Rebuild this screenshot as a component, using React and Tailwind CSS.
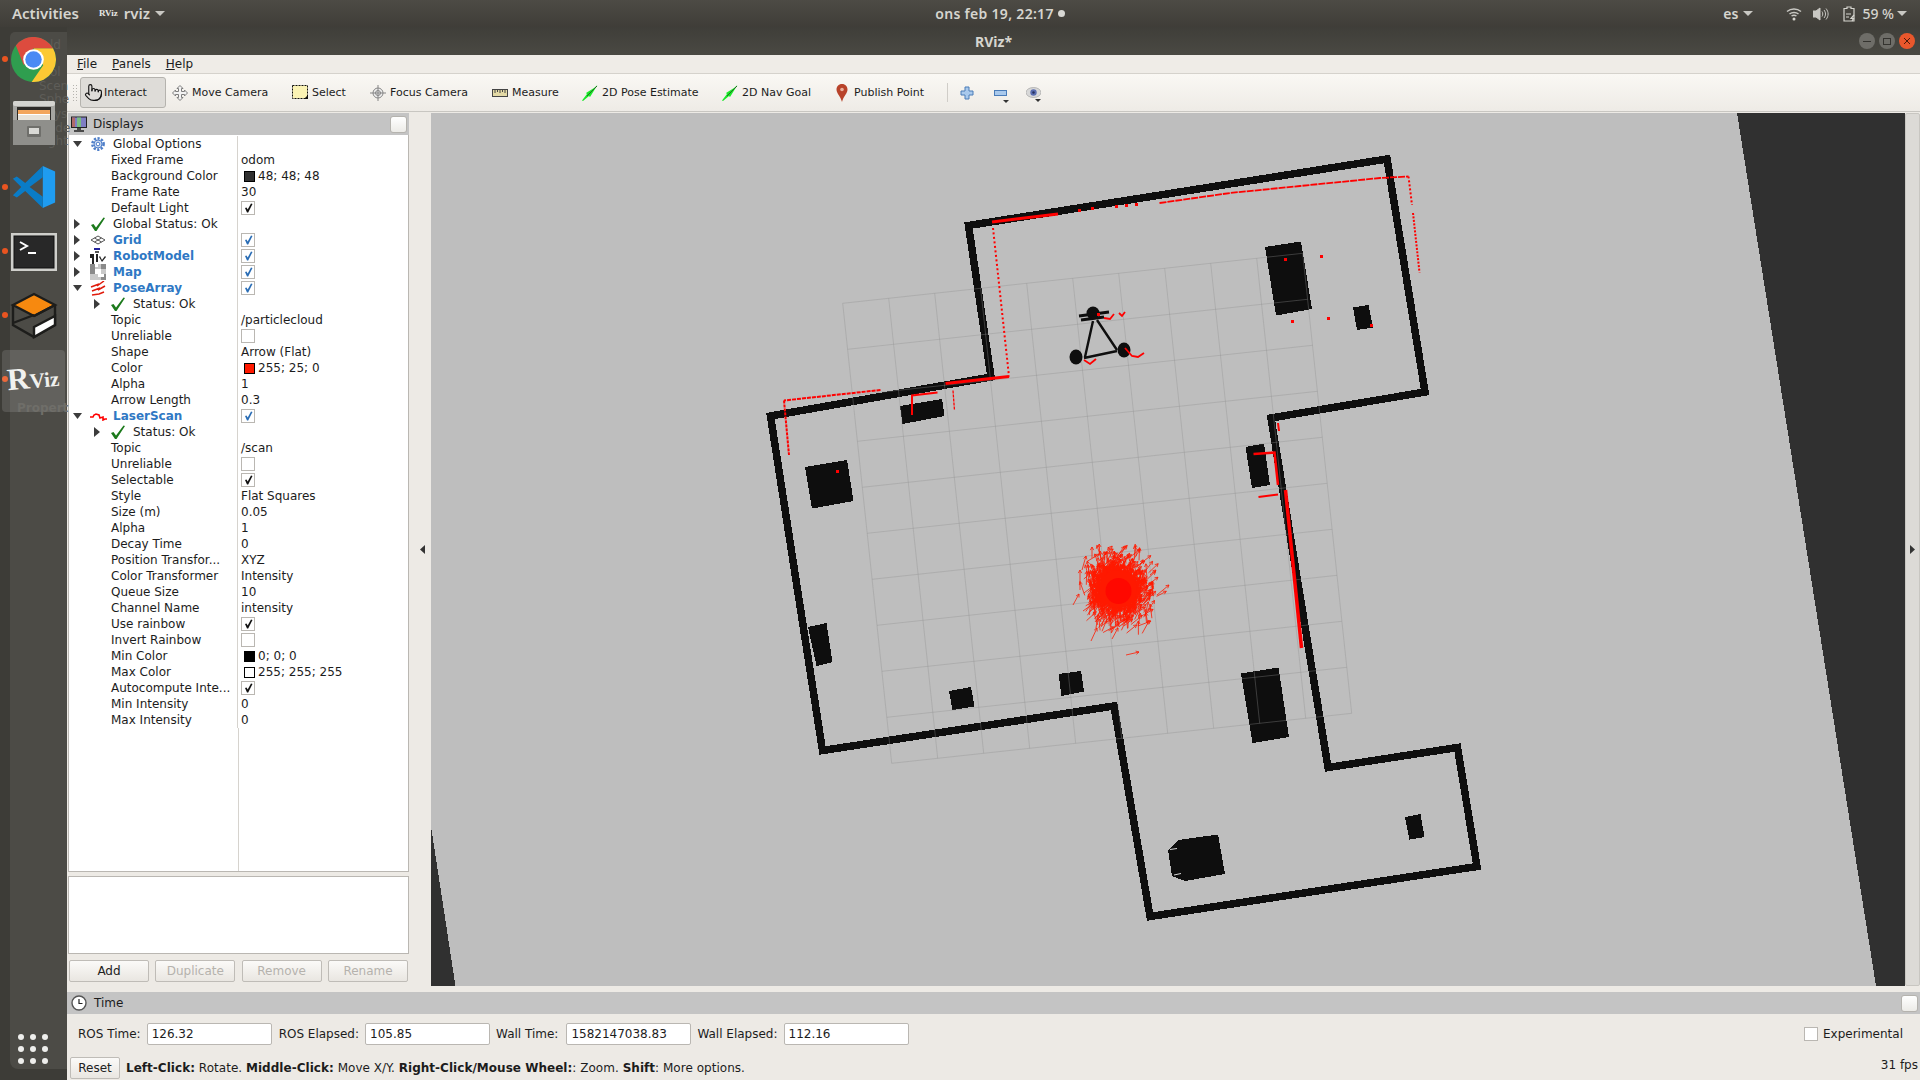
import { Pointer } from 'lucide-react';

const FONT = "font-['DejaVu_Sans',sans-serif]";

// --- tree data ---
const rows = [
  { arrow: 'down', icon: 'gear', label: 'Global Options' },
  { label: 'Fixed Frame', value: 'odom' },
  { label: 'Background Color', color: 'bg-[#303030]', value: '48; 48; 48' },
  { label: 'Frame Rate', value: '30' },
  { label: 'Default Light', check: 'black' },
  { arrow: 'right', icon: 'ok', label: 'Global Status: Ok' },
  { arrow: 'right', icon: 'grid', label: 'Grid', link: true, check: 'blue' },
  { arrow: 'right', icon: 'robot', label: 'RobotModel', link: true, check: 'blue' },
  { arrow: 'right', icon: 'map', label: 'Map', link: true, check: 'blue' },
  { arrow: 'down', icon: 'pose', label: 'PoseArray', link: true, check: 'blue' },
  { arrow: 'right', icon: 'ok', label: 'Status: Ok', sub: true },
  { label: 'Topic', value: '/particlecloud' },
  { label: 'Unreliable', check: 'none' },
  { label: 'Shape', value: 'Arrow (Flat)' },
  { label: 'Color', color: 'bg-[#ff1900]', value: '255; 25; 0' },
  { label: 'Alpha', value: '1' },
  { label: 'Arrow Length', value: '0.3' },
  { arrow: 'down', icon: 'laser', label: 'LaserScan', link: true, check: 'blue' },
  { arrow: 'right', icon: 'ok', label: 'Status: Ok', sub: true },
  { label: 'Topic', value: '/scan' },
  { label: 'Unreliable', check: 'none' },
  { label: 'Selectable', check: 'black' },
  { label: 'Style', value: 'Flat Squares' },
  { label: 'Size (m)', value: '0.05' },
  { label: 'Alpha', value: '1' },
  { label: 'Decay Time', value: '0' },
  { label: 'Position Transfor...', value: 'XYZ' },
  { label: 'Color Transformer', value: 'Intensity' },
  { label: 'Queue Size', value: '10' },
  { label: 'Channel Name', value: 'intensity' },
  { label: 'Use rainbow', check: 'black' },
  { label: 'Invert Rainbow', check: 'none' },
  { label: 'Min Color', color: 'bg-black', value: '0; 0; 0' },
  { label: 'Max Color', color: 'bg-white', value: '255; 255; 255' },
  { label: 'Autocompute Inte...', check: 'black' },
  { label: 'Min Intensity', value: '0' },
  { label: 'Max Intensity', value: '0' },
];

// --- map data, in page coordinates ---
const wall = '968.5,225.5 1387,159 1425,392 1271,418 1328,767.5 1457.5,747.5 1477,866.5 1150,916.5 1114,706 822.5,750.5 770.5,416 991,377';

const obstacles = [
  '1265,247 1301,241.5 1312,309 1276,315.5',
  '1353,307.5 1368.5,305 1373,327.5 1357,330',
  '900,406 942,399 944.5,416 902.5,424',
  '805,467 847,460 853.5,501 812,508.5',
  '1245.5,447 1264,443.5 1270,485 1252,488',
  '808,627 826.5,623 832.5,662 816.5,666',
  '949,691 971,687 974.5,706.5 952.5,710',
  '1058.5,674 1081,671 1084,691.5 1061.5,696',
  '1241,673.5 1278.5,667.5 1289,737 1252.5,743',
  '1168,850 1178,840 1218,834.5 1225,874 1185,881 1172,876',
  '1405,817 1420.5,814 1424.5,837 1409.5,839.5',
];

const scanLines = [
  { p: '1159.5,203 1230,193 1300,186 1380,178 1408.5,176.5', w: 1.8, dash: '7 1' },
  { p: '992,222 1058,214', w: 3 },
  { p: '1009,376.5 945.5,383.5', w: 3 },
  { p: '880.5,390 784,400.5', w: 2, dash: '4 1' },
  { p: '784,400.5 789,455', w: 2, dash: '3 1' },
  { p: '937.5,392.5 912,395.5 912,415', w: 2 },
  { p: '953,390.5 954.5,410.5', w: 1.3, dash: '3 1' },
  { p: '1278,423 1279,431', w: 2 },
  { p: '1253.5,454 1274.5,452.5 1278,485', w: 2.5 },
  { p: '1258.5,497 1278,494.5', w: 2 },
  { p: '1285.5,490 1301.5,648', w: 3.5 },
  { p: '993,228 1009,376.5', w: 2, dash: '2 2.5' },
  { p: '1408.5,176.5 1412,205', w: 2, dash: '2 2' },
  { p: '1413,213 1419.5,272.5', w: 2, dash: '2 1.5' },
];

const scanDots = [
  [1079, 210], [1092, 208], [1116, 206], [1126, 205], [1136, 204],
  [837.5, 471.5], [1285.5, 259.5], [1321, 256], [1292.5, 321.5], [1328, 318.5], [1371, 325],
  [1098, 314],
];

// small seeded random so the cloud is the same on every render
function makeRandom(seed) {
  let s = seed;
  return () => {
    s = (s + 0x6d2b79f5) | 0;
    let t = Math.imul(s ^ (s >>> 15), 1 | s);
    t = (t + Math.imul(t ^ (t >>> 7), 61 | t)) ^ t;
    return ((t ^ (t >>> 14)) >>> 0) / 4294967296;
  };
}

function arrowPath(x, y, a, len) {
  const ex = x + Math.cos(a) * len;
  const ey = y + Math.sin(a) * len;
  const h = 3.5;
  const l = [ex - Math.cos(a - 0.5) * h, ey - Math.sin(a - 0.5) * h];
  const r = [ex - Math.cos(a + 0.5) * h, ey - Math.sin(a + 0.5) * h];
  return `M${x.toFixed(1)} ${y.toFixed(1)}L${ex.toFixed(1)} ${ey.toFixed(1)}M${l[0].toFixed(1)} ${l[1].toFixed(1)}L${ex.toFixed(1)} ${ey.toFixed(1)}L${r[0].toFixed(1)} ${r[1].toFixed(1)}`;
}

function makeCloud() {
  const rnd = makeRandom(42);
  const gauss = () => (rnd() + rnd() + rnd() + rnd() - 2) * 1.7;
  let d = '';
  for (let i = 0; i < 1000; i++) {
    const x = 1115 + gauss() * 14;
    const y = 596 + gauss() * 15;
    const a = -Math.PI / 2 + 0.35 + (rnd() - 0.5) * 1.5;
    d += arrowPath(x, y, a, 11 + rnd() * 4);
  }
  return d;
}

const cloud = makeCloud();

const strayArrows = [
  [1126, 655, 1139, 652], [1138, 626, 1151, 621], [1073, 605, 1079, 594], [1091, 641, 1097, 628],
  [1112, 639, 1118, 628], [1157, 595, 1169, 585], [1092, 558, 1092, 547], [1082, 570, 1086, 556],
  [1080, 590, 1080, 570], [1150, 575, 1156, 570],
].map(([x1, y1, x2, y2]) => arrowPath(x1, y1, Math.atan2(y2 - y1, x2 - x1), Math.hypot(x2 - x1, y2 - y1))).join('');

function gridLines() {
  const out = [];
  const ox = 842.7;
  const oy = 303.3;
  for (let i = 0; i <= 10; i++) {
    out.push([ox + i * 46, oy - i * 5, ox + i * 46 + 49, oy - i * 5 + 460]);
    out.push([ox + i * 4.9, oy + i * 46, ox + i * 4.9 + 460, oy + i * 46 - 50]);
  }
  return out;
}

function MapView() {
  return (
    <svg viewBox="431 113 1474 873" className="block w-full h-full" shapeRendering="crispEdges">
      <polygon points="431,113 1737,113 1876,986 455.5,986 431,826.5" fill="#bebebe" />
      {obstacles.map((p, i) => <polygon key={i} points={p} fill="#0e0e0e" />)}
      <path d="M1170 849.5L1177 848.5M1174 875L1181 873.5" stroke="#d8d8d8" strokeWidth="1" shapeRendering="auto" />
      <polygon points={wall} fill="none" stroke="#0e0e0e" strokeWidth="7.5" strokeLinejoin="miter" />
      {gridLines().map(([x1, y1, x2, y2], i) => (
        <line key={i} x1={x1} y1={y1} x2={x2} y2={y2} stroke="#909090" strokeOpacity="0.4" strokeWidth="0.9" shapeRendering="auto" />
      ))}
      {/* robot */}
      <g fill="#0e0e0e" stroke="#0e0e0e" shapeRendering="auto">
        <circle cx="1093" cy="313" r="6.5" stroke="none" />
        <path d="M1079 316L1109 312M1081 320L1104 317" strokeWidth="2.8" fill="none" />
        <path d="M1093 321L1085 357M1097 320L1117 350M1084 358L1117 351" strokeWidth="2.4" fill="none" />
        <ellipse cx="1076" cy="357" rx="6.5" ry="7.5" stroke="none" />
        <ellipse cx="1124" cy="350" rx="6.5" ry="7.5" stroke="none" />
      </g>
      {/* laser */}
      <g fill="none" stroke="#ff0000" strokeLinejoin="miter" shapeRendering="auto">
        {scanLines.map((l, i) => (
          <polyline key={i} points={l.p} strokeWidth={l.w} strokeDasharray={l.dash} />
        ))}
        <path d="M1104 318L1110 319L1114 314M1119 313L1122 316L1125 312M1084 360L1090 364L1096 359M1125 348L1132 356L1138 357L1144 353" strokeWidth="1.8" />
      </g>
      {scanDots.map(([x, y], i) => <rect key={i} x={x - 1.5} y={y - 1.5} width="3" height="3" fill="#ff0000" />)}
      {/* particle cloud */}
      <g shapeRendering="auto">
        <path d={cloud} fill="none" stroke="#ff1900" strokeWidth="0.8" />
        <path d={strayArrows} fill="none" stroke="#ff1900" strokeWidth="0.8" />
        <circle cx="1118" cy="589" r="19" fill="#ff1900" />
        <circle cx="1118.5" cy="591" r="13" fill="#ff0800" />
      </g>
    </svg>
  );
}

// --- small icons ---
function TreeIcon({ name }) {
  if (name === 'ok') {
    return (
      <svg width="16" height="16" viewBox="0 0 16 16"><path d="M1 9L3.5 8L6 11.5L13.5 1.5L15 2L6.5 15L5 15Z" fill="#1c7a1c" /></svg>
    );
  }
  if (name === 'gear') {
    return (
      <svg width="16" height="16" viewBox="0 0 16 16">
        <circle cx="8" cy="8" r="5.6" fill="none" stroke="#4f7fc9" strokeWidth="2.6" strokeDasharray="2.2 1.4" />
        <circle cx="8" cy="8" r="4" fill="#cfdcf2" stroke="#4f7fc9" />
        <circle cx="8" cy="8" r="1.8" fill="#fff" stroke="#4f7fc9" />
      </svg>
    );
  }
  if (name === 'grid') {
    return (
      <svg width="16" height="16" viewBox="0 0 16 16" fill="none" stroke="#444" strokeWidth="0.9">
        <path d="M1 8L8 4L15 8L8 12ZM4.5 6L11.5 10M11.5 6L4.5 10" />
      </svg>
    );
  }
  if (name === 'robot') {
    return (
      <svg width="18" height="17" viewBox="0 0 18 17">
        <rect x="5" y="0" width="6" height="2" fill="#23239c" />
        <rect x="6" y="3" width="4" height="2" fill="#555" />
        <path d="M1 6H5V16H3V10H1ZM7 6H9V14H7ZM11 8L13 12L16 8L17 9L13 14L10 9Z" fill="#222" />
      </svg>
    );
  }
  if (name === 'map') {
    return (
      <svg width="16" height="16" viewBox="0 0 16 16">
        <rect width="16" height="16" fill="#8a8a8a" />
        <path d="M5 0H11V5H5ZM0 10H5V16H0ZM5 10H11V16H5ZM11 5H16V10H11Z" fill="#c9c9c9" />
        <path d="M5 5H11V10H5ZM5 0H8V3H5ZM8 10H11V13H8ZM11 10H14V13H11Z" fill="#fff" />
      </svg>
    );
  }
  if (name === 'pose') {
    return (
      <svg width="16" height="15" viewBox="0 0 16 15" fill="none" stroke="#e01b0c" strokeWidth="1.5">
        <path d="M1 6L9 3L7 5L14 0M2 10L10 7L8 9L15 5M2 14L9 13L14 11" />
      </svg>
    );
  }
  return (
    <svg width="17" height="10" viewBox="0 0 17 10" fill="none" stroke="#f00" strokeWidth="1.6">
      <path d="M0 6H3L4 4L6 3L9 4L10 7L13 6L13 9L15 8H17" />
    </svg>
  );
}

function Arrow({ dir }) {
  if (dir === 'down') {
    return <svg width="9" height="6" viewBox="0 0 9 6"><path d="M0 0H9L4.5 6Z" fill="#3c3c3c" /></svg>;
  }
  return <svg width="6" height="10" viewBox="0 0 6 10"><path d="M0 0L6 5L0 10Z" fill="#3c3c3c" /></svg>;
}

function CheckBox({ mark, className }) {
  return (
    <span className={`flex items-center justify-center w-[14px] h-[14px] bg-white border border-[#bab7b2] shrink-0 ${className || ''}`}>
      {mark === 'black' && <svg width="9" height="10" viewBox="0 0 9 10"><path d="M1 5L2.5 4.5L3.7 6.5L7 0.5L8.5 1L4.2 9.5H3Z" fill="#111" /></svg>}
      {mark === 'blue' && <svg width="9" height="10" viewBox="0 0 9 10"><path d="M1 5L2.5 4.5L3.7 6.5L7 0.5L8.5 1L4.2 9.5H3Z" fill="#2a6db5" /></svg>}
    </span>
  );
}

function TreeRow({ row }) {
  return (
    <div className="flex h-4 items-center text-[12px] leading-4 text-[#1c1c1c]">
      <div className="w-[169px] h-4 flex items-center shrink-0 border-r border-[#d6d3ce] whitespace-nowrap overflow-hidden">
        {row.arrow ? (
          <>
            <span className={`flex items-center justify-center shrink-0 w-4 ${row.sub ? 'ml-[20px]' : ''}`}><Arrow dir={row.arrow} /></span>
            <span className="flex items-center justify-center shrink-0 w-[24px] h-4 ml-[1px]"><TreeIcon name={row.icon} /></span>
            <span className={`ml-[3px] ${row.link ? 'font-bold text-[#2f78c4]' : ''}`}>{row.label}</span>
          </>
        ) : (
          <span className="pl-[42px]">{row.label}</span>
        )}
      </div>
      <div className="flex items-center pl-[3px] whitespace-nowrap">
        {row.check && <CheckBox mark={row.check} />}
        {row.color && <span className={`w-[11px] h-[11px] ml-[3px] mr-[3px] border border-black ${row.color}`} />}
        {row.value}
      </div>
    </div>
  );
}

function ToolIcon({ name }) {
  if (name === 'move') {
    return (
      <svg width="16" height="16" viewBox="0 0 16 16" fill="#f2f2f2" stroke="#7d7d7d">
        <path d="M8 .5L11 3.5H9.5V6.5H12.5V5L15.5 8L12.5 11V9.5H9.5V12.5H11L8 15.5L5 12.5H6.5V9.5H3.5V11L.5 8L3.5 5V6.5H6.5V3.5H5Z" />
      </svg>
    );
  }
  if (name === 'select') {
    return (
      <svg width="16" height="15" viewBox="0 0 16 15">
        <rect x="0.5" y="0.5" width="15" height="13" fill="#fbf3b4" stroke="#111" strokeDasharray="2 1" />
        <path d="M12 14H16V10Z" fill="#111" />
      </svg>
    );
  }
  if (name === 'focus') {
    return (
      <svg width="16" height="16" viewBox="0 0 16 16" fill="none" stroke="#858585">
        <circle cx="8" cy="8" r="5" fill="#eee" />
        <circle cx="8" cy="8" r="2.5" />
        <path d="M8 0V16M0 8H16" />
      </svg>
    );
  }
  if (name === 'measure') {
    return (
      <svg width="16" height="8" viewBox="0 0 16 8">
        <rect x="0.5" y="0.5" width="15" height="7" fill="#e3d9a5" stroke="#444" />
        <path d="M3 1V4M5.5 1V3M8 1V4M10.5 1V3M13 1V4" stroke="#444" />
      </svg>
    );
  }
  if (name === 'arrow') {
    return (
      <svg width="16" height="16" viewBox="0 0 16 16">
        <path d="M0 15.5L5 9L4 8L12 3L15.5 0L13 4L8 12L7 11L1 16Z" fill="#18e828" />
        <path d="M5 11L15 1" stroke="#246b24" strokeWidth="1" />
      </svg>
    );
  }
  if (name === 'pin') {
    return (
      <svg width="12" height="18" viewBox="0 0 12 18">
        <path d="M6 0C2.5 0 0.5 2.5 0.5 5.5C0.5 9.5 4.5 12 6 18C7.5 12 11.5 9.5 11.5 5.5C11.5 2.5 9.5 0 6 0Z" fill="#b8432a" />
        <circle cx="6" cy="5.5" r="1.8" fill="#eab09d" />
      </svg>
    );
  }
  return null;
}

function Tool({ icon, label, className }) {
  return (
    <div className={`flex items-center gap-1 shrink-0 whitespace-nowrap ${className}`}>
      <span className="flex items-center justify-center w-4 h-[18px]"><ToolIcon name={icon} /></span>
      <span className="mt-[2px]">{label}</span>
    </div>
  );
}

function GhostButton({ children, disabled }) {
  return (
    <button className={`w-[80px] h-[22px] text-[12px] rounded-[2px] border border-[#bfbcb7] bg-gradient-to-b from-[#fbfaf8] to-[#e9e6e1] ${disabled ? 'text-[#b5b2ad]' : 'text-[#222]'}`}>
      {children}
    </button>
  );
}

function SmallButton() {
  return <span className="block w-[17px] h-[17px] rounded-[3px] border border-[#b5b3ae] bg-gradient-to-b from-white to-[#ecebe7]" />;
}

function TimeField({ label, value, className, inputClass }) {
  return (
    <>
      <span className={`whitespace-nowrap ${className}`}>{label}</span>
      <span className={`w-[125px] h-[22px] pl-[4px] rounded-[2px] bg-white border border-[#bab7b2] leading-5 ${inputClass}`}>{value}</span>
    </>
  );
}

// --- dock ---
function Chrome() {
  return (
    <svg width="45" height="45" viewBox="0 0 48 48">
      <circle cx="24" cy="24" r="24" fill="#2f9e4f" />
      <path d="M24 12H44.8A24 24 0 0 1 22 47.9L34.4 30Z" fill="#fcc934" />
      <path d="M44.8 12A24 24 0 0 0 5.2 9L13.6 30L24 12Z" fill="#dd4b3e" />
      <circle cx="24" cy="24" r="11" fill="#fff" />
      <circle cx="24" cy="24" r="8.8" fill="#4a8af4" />
    </svg>
  );
}

function Files() {
  return (
    <svg width="42" height="44" viewBox="0 0 42 44">
      <rect x="0" y="0" width="42" height="44" rx="2" fill="#a6a6a2" />
      <rect x="0" y="0" width="42" height="5" rx="2" fill="#d4d4d0" />
      <rect x="4" y="6" width="34" height="13" fill="#2d2b28" />
      <rect x="5" y="9" width="32" height="4" fill="#f3a65c" />
      <rect x="5" y="13" width="32" height="1" fill="#fff" />
      <rect x="5" y="14" width="32" height="5" fill="#e7e3da" />
      <rect x="0" y="19" width="42" height="25" fill="#8f8f8b" />
      <rect x="14" y="25" width="14" height="11" rx="1" fill="#6f6f6b" />
      <rect x="16" y="27" width="10" height="6" fill="#d9d9d5" />
    </svg>
  );
}

function VsCode() {
  return (
    <svg width="44" height="44" viewBox="0 0 100 100">
      <path d="M70 2L98 15V85L70 98Z" fill="#1f9cf0" />
      <path d="M70 2L30 41L11 26L2 31L21 50L2 69L11 74L30 59L70 98V72L40 50L70 28Z" fill="#0a7cc7" />
    </svg>
  );
}

function Terminal() {
  return (
    <svg className="mt-[2px]" width="46" height="38" viewBox="0 0 46 38">
      <rect x="0" y="0" width="46" height="38" fill="#cfcfcb" />
      <rect x="3" y="3" width="40" height="32" fill="#282828" stroke="#111" />
      <path d="M9 9L16 13L9 17" fill="none" stroke="#fff" strokeWidth="2" />
      <rect x="17" y="19" width="8" height="2" fill="#fff" />
    </svg>
  );
}

function IsoBox() {
  return (
    <svg width="48" height="48" viewBox="0 0 48 48">
      <path d="M3 14L24 3L45 14L24 25Z" fill="#f7890f" stroke="#1d1d1b" strokeWidth="2.4" />
      <path d="M3 14V34L24 46L45 34V14M3 32L24 24M24 25L45 14" fill="none" stroke="#1d1d1b" strokeWidth="2.4" />
      <path d="M24 36L45 25V34L24 46Z" fill="#fff" stroke="#1d1d1b" strokeWidth="2.4" />
    </svg>
  );
}

function DockCell({ dot, children }) {
  return (
    <div className="relative h-16 flex items-center justify-center -ml-[10px] w-[67px]">
      {dot && <span className="absolute left-[2px] top-[29px] w-[6px] h-[6px] rounded-full bg-[#e95420]" />}
      {children}
    </div>
  );
}

function Dock() {
  return (
    <div className="w-[67px] shrink-0 bg-[#3d3c37] pl-[10px] pt-[5px] pb-[11px] flex">
      <div className="relative w-[57px] bg-[#4c4b46] rounded-tl-[5px] rounded-bl-[8px] flex flex-col">
        <span className="absolute left-[40px] top-[4px] text-[12px] text-[#5e5d58]">ld</span>
        <span className="absolute left-[40px] top-[31px] text-[12px] text-[#5e5d58]">ol</span>
        <span className="absolute left-[29px] top-[45px] text-[12px] text-[#5e5d58]">Scen</span>
        <span className="absolute left-[29px] top-[58px] text-[12px] text-[#5e5d58]">Sphe</span>
        <span className="absolute left-[44px] top-[73px] text-[12px] text-[#5e5d58]">ys</span>
        <span className="absolute left-[38px] top-[87px] text-[12px] text-[#5e5d58]">ode</span>
        <span className="absolute left-[38px] top-[100px] text-[12px] text-[#5e5d58]">ght</span>
        <div className="-mt-[5px] relative">
          <DockCell dot><Chrome /></DockCell>
          <DockCell><Files /></DockCell>
          <DockCell dot><VsCode /></DockCell>
          <DockCell dot><Terminal /></DockCell>
          <DockCell dot><IsoBox /></DockCell>
          <DockCell dot>
            <span className="absolute left-[2px] top-[3px] w-[63px] h-[62px] rounded-[4px] bg-[#ffffff20]" />
            <span className="absolute left-[17px] top-[52px] text-[12px] font-bold text-[#6f6e69] font-['DejaVu_Sans',sans-serif]">Propert</span>
            <span className="relative -ml-[2px] -mt-[3px] -rotate-[5deg] font-bold text-[#f1f1ee] font-['Liberation_Serif',serif] leading-none">
              <span className="text-[31px]">R</span><span className="text-[21px]">Viz</span>
            </span>
          </DockCell>
        </div>
        <div className="mt-auto mb-[5px] ml-[8px] grid grid-cols-3 gap-x-[6px] gap-y-[6px] w-[30px]">
          {[0, 1, 2, 3, 4, 5, 6, 7, 8].map((i) => <span key={i} className="w-[6px] h-[6px] rounded-full bg-[#eeeeec]" />)}
        </div>
      </div>
    </div>
  );
}

function Caret() {
  return <svg width="10" height="5" viewBox="0 0 10 5"><path d="M0 0H10L5 5Z" fill="#c9c8c3" /></svg>;
}

function TopBar() {
  return (
    <div className="h-[27px] shrink-0 grid grid-cols-[1fr_auto_1fr] items-center bg-gradient-to-b from-[#4d4b45] to-[#3f3d38] text-[14px] font-semibold text-[#d6d5cf] font-['Noto_Sans',sans-serif]">
      <div className="flex items-center">
        <span className="ml-[12px] text-[15px]">Activities</span>
        <span className="ml-[20px] text-[9px] font-bold text-[#e8e8e4] font-['Liberation_Serif',serif]">RViz</span>
        <span className="ml-[6px] text-[15px]">rviz</span>
        <span className="ml-[5px]"><Caret /></span>
      </div>
      <div className="flex items-center gap-[4px] tracking-[0.3px] ml-[80px]">
        ons feb 19, 22:17
        <span className="w-[7px] h-[7px] rounded-full bg-[#d8d8d4]" />
      </div>
      <div className="flex items-center justify-end pr-[13px]">
        <span>es</span>
        <span className="ml-[5px]"><Caret /></span>
        <svg className="ml-[33px]" width="16" height="14" viewBox="0 0 16 14" fill="none" stroke="#c9c8c3" strokeWidth="1.5">
          <path d="M1 4.5C5 1 11 1 15 4.5M3.5 7C6 5 10 5 12.5 7M5.5 9C7 8 9 8 10.5 9" />
          <circle cx="8" cy="12" r="1.5" fill="#d6d5cf" stroke="none" />
        </svg>
        <svg className="ml-[11px]" width="16" height="14" viewBox="0 0 16 14" fill="none" stroke="#c9c8c3">
          <path d="M0 4H3L7 1V13L3 10H0Z" fill="#c9c8c3" />
          <path d="M9 4.5C10 6 10 8 9 9.5M11 3C13 5.5 13 8.5 11 11M13 1.5C15.8 5 15.8 9 13 12.5" />
        </svg>
        <svg className="ml-[14px]" width="12" height="16" viewBox="0 0 12 16" fill="none" stroke="#d6d5cf" strokeWidth="1.2">
          <path d="M1 2.5H4V1H8V2.5H11V15H1Z" />
          <path d="M3 8H8M3 11H6M11 9L8 12.5H10.5L9 15" />
        </svg>
        <span className="ml-[7px] font-medium">59 %</span>
        <span className="ml-[3px]"><Caret /></span>
      </div>
    </div>
  );
}

function WindowButtons() {
  return (
    <div className="flex items-center gap-[4px] pr-[5px]">
      <span className="w-4 h-4 rounded-full bg-[#6e6d68] flex items-center justify-center"><span className="w-[8px] h-px bg-[#34332f]" /></span>
      <span className="w-4 h-4 rounded-full bg-[#6e6d68] flex items-center justify-center"><span className="w-[8px] h-[7px] border border-[#34332f]" /></span>
      <span className="w-4 h-4 rounded-full bg-[#e9572c] flex items-center justify-center">
        <svg width="8" height="8" viewBox="0 0 8 8" stroke="#4a1a0a"><path d="M1 1L7 7M7 1L1 7" /></svg>
      </span>
    </div>
  );
}

function MenuItem({ first, rest, className }) {
  return <span className={className}><span className="underline underline-offset-1">{first}</span>{rest}</span>;
}

export default function App() {
  return (
    <div className={`w-[1920px] h-[1080px] overflow-hidden flex flex-col bg-[#3d3c37] ${FONT}`}>
      <TopBar />
      <div className="flex flex-1 min-h-0">
        <Dock />
        <div className="flex-1 flex flex-col min-w-0">
          {/* window title */}
          <div className="h-[28px] shrink-0 relative flex items-center justify-center bg-gradient-to-b from-[#3f3e39] to-[#4a4943] text-[14px] font-bold text-[#d6d5cf] font-['Noto_Sans',sans-serif]">
            RViz*
            <div className="absolute right-0 top-[6px]"><WindowButtons /></div>
          </div>
          <div className="flex-1 flex flex-col bg-[#edeae5]">
            {/* menu */}
            <div className="h-[19px] shrink-0 flex items-center bg-[#efece7] border-b border-[#d5d2cc] text-[12px] text-[#1c1c1c]">
              <MenuItem first="F" rest="ile" className="ml-[10px]" />
              <MenuItem first="P" rest="anels" className="ml-[15px]" />
              <MenuItem first="H" rest="elp" className="ml-[15px]" />
            </div>
            {/* toolbar */}
            <div className="h-[38px] shrink-0 flex items-center bg-gradient-to-b from-[#faf8f4] to-[#eeebe6] border-b border-[#c8c6c1] text-[11px] text-[#1c1c1c]">
              <span className="ml-[5px] w-[5px] h-[17px] bg-[radial-gradient(#b5b3ae_1px,transparent_1px)] bg-[length:3px_3px]" />
              <div className="ml-[3px] mr-[6px] w-[86px] h-[31px] flex items-center gap-[1px] pl-[3px] rounded-[3px] bg-[#dedcd8] border border-[#b5b3ae] shrink-0">
                <Pointer size={19} strokeWidth={1.4} color="#111" />
                <span className="mt-[2px]">Interact</span>
              </div>
              <Tool icon="move" label="Move Camera" className="w-[120px]" />
              <Tool icon="select" label="Select" className="w-[78px]" />
              <Tool icon="focus" label="Focus Camera" className="w-[122px]" />
              <Tool icon="measure" label="Measure" className="w-[90px]" />
              <Tool icon="arrow" label="2D Pose Estimate" className="w-[140px]" />
              <Tool icon="arrow" label="2D Nav Goal" className="w-[112px]" />
              <Tool icon="pin" label="Publish Point" className="w-[113px]" />
              <span className="w-px h-[19px] bg-[#d0cdc8]" />
              <svg className="ml-[12px]" width="14" height="14" viewBox="0 0 14 14">
                <path d="M5 1H9V5H13V9H9V13H5V9H1V5H5Z" fill="#a9c9ec" stroke="#4a7cb8" />
              </svg>
              <span className="relative ml-[20px] w-[13px] h-[6px] bg-[#a9c9ec] border border-[#4a7cb8]">
                <span className="absolute left-[8px] top-[9px] w-0 h-0 border-x-[3px] border-x-transparent border-t-[3px] border-t-[#333]" />
              </span>
              <span className="relative ml-[19px] flex items-center">
                <svg width="15" height="11" viewBox="0 0 15 11">
                  <ellipse cx="7.5" cy="5.5" rx="7.5" ry="5" fill="#d8d8d8" stroke="#999" strokeWidth="0.6" />
                  <circle cx="7.5" cy="5.5" r="3.2" fill="#5a6db0" />
                  <circle cx="7.5" cy="5.5" r="1.2" fill="#26305c" />
                </svg>
                <span className="absolute left-[9px] top-[12px] w-0 h-0 border-x-[3px] border-x-transparent border-t-[3px] border-t-[#333]" />
              </span>
            </div>
            {/* main area */}
            <div className="h-[880px] shrink-0 flex pt-px pb-[6px]">
              <div className="w-[341px] ml-px shrink-0 flex flex-col">
                <div className="h-[22px] shrink-0 flex items-center bg-[#c4c4c4] text-[12px] text-[#1c1c1c]">
                  <svg className="ml-[3px]" width="16" height="16" viewBox="0 0 16 16">
                    <rect x="0.5" y="1" width="15" height="10.5" fill="#7f7fc4" stroke="#222" />
                    <rect x="1" y="1.5" width="3" height="9.5" fill="#b06a6a" />
                    <rect x="6" y="1.5" width="4" height="9.5" fill="#7bbd83" />
                    <path d="M6 13H10M3 15H13" stroke="#222" strokeWidth="1.4" />
                  </svg>
                  <span className="ml-[6px]">Displays</span>
                  <span className="ml-auto mr-[2px]"><SmallButton /></span>
                </div>
                <div className="h-[737px] shrink-0 pt-px bg-white border border-[#bab7b2] border-t-0 flex flex-col">
                  {rows.map((r, i) => <TreeRow key={i} row={r} />)}
                  <div className="ml-[169px] flex-1 border-l border-[#d6d3ce]" />
                </div>
                <div className="h-[78px] mt-[4px] shrink-0 bg-white border border-[#bab7b2]" />
                <div className="flex justify-between px-[1px] mt-[6px]">
                  <GhostButton>Add</GhostButton>
                  <GhostButton disabled>Duplicate</GhostButton>
                  <GhostButton disabled>Remove</GhostButton>
                  <GhostButton disabled>Rename</GhostButton>
                </div>
              </div>
              <div className="w-[22px] shrink-0 flex items-center justify-center">
                <svg className="ml-[5px]" width="5" height="9" viewBox="0 0 5 9"><path d="M5 0V9L0 4.5Z" fill="#333" /></svg>
              </div>
              <div className="w-[1474px] shrink-0 bg-[#303030]">
                <MapView />
              </div>
              <div className="flex-1 flex items-center justify-center bg-[#dcdad6] border border-[#c8c6c1] rounded-[2px]">
                <svg width="5" height="9" viewBox="0 0 5 9"><path d="M0 0V9L5 4.5Z" fill="#333" /></svg>
              </div>
            </div>
            {/* time panel */}
            <div className="h-[22px] shrink-0 flex items-center bg-[#c4c4c4] text-[12px] text-[#1c1c1c]">
              <svg className="ml-[4px]" width="16" height="16" viewBox="0 0 16 16">
                <circle cx="8" cy="8" r="7" fill="#fff" stroke="#555" strokeWidth="1.4" />
                <path d="M8 4V8.5H11.5" fill="none" stroke="#222" strokeWidth="1.2" />
              </svg>
              <span className="ml-[7px]">Time</span>
              <span className="ml-auto mr-[2px]"><SmallButton /></span>
            </div>
            <div className="h-[43px] shrink-0 flex items-start pt-[9px] text-[12px] text-[#1c1c1c] leading-[22px]">
              <TimeField label="ROS Time:" value="126.32" className="ml-[11px]" inputClass="ml-[6px]" />
              <TimeField label="ROS Elapsed:" value="105.85" className="ml-[7px]" inputClass="ml-[6px]" />
              <TimeField label="Wall Time:" value="1582147038.83" className="ml-[6px]" inputClass="ml-[8px]" />
              <TimeField label="Wall Elapsed:" value="112.16" className="ml-[6px]" inputClass="ml-[6px]" />
              <span className="ml-auto flex items-center h-[22px] mr-[17px]">
                <CheckBox mark="none" className="mr-[5px]" />
                Experimental
              </span>
            </div>
            <div className="flex-1 flex items-center text-[12px] text-[#1c1c1c] relative">
              <button className="ml-[3px] -mt-[2px] w-[50px] h-[22px] rounded-[2px] border border-[#bfbcb7] bg-gradient-to-b from-[#fbfaf8] to-[#e9e6e1] text-[#222]">Reset</button>
              <span className="ml-[6px] whitespace-nowrap -mt-[2px] tracking-[0.03px]">
                <b>Left-Click:</b> Rotate. <b>Middle-Click:</b> Move X/Y. <b>Right-Click/Mouse Wheel:</b>: Zoom. <b>Shift</b>: More options.
              </span>
              <span className="ml-auto mr-[2px] -mt-[8px]">31 fps</span>
            </div>
          </div>
        </div>
      </div>
    </div>
  );
}
